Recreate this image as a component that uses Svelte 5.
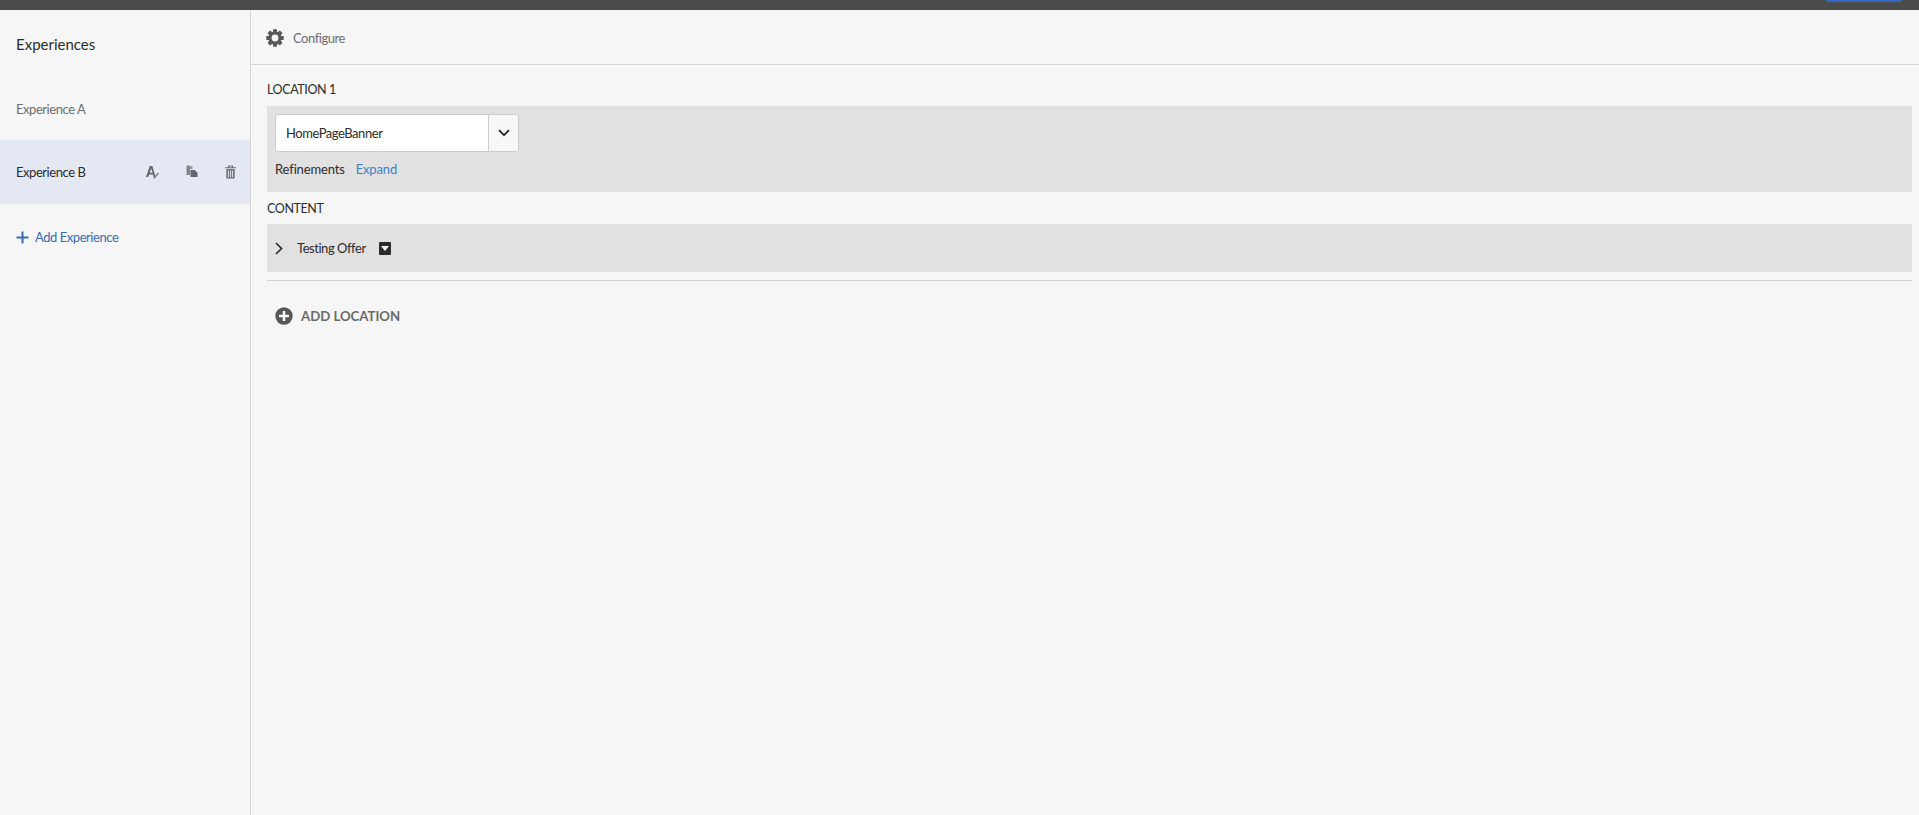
<script>
	const experiences = [
		{ name: 'Experience A', active: false },
		{ name: 'Experience B', active: true }
	];
</script>

<div class="page">
	<header class="topbar">
		<div class="save-btn"></div>
	</header>

	<div class="body">
		<aside class="sidebar">
			<h2 class="side-title">Experiences</h2>
			<ul class="exp-list">
				{#each experiences as exp}
					<li class="exp" class:active={exp.active}>
						<span class="exp-name">{exp.name}</span>
						{#if exp.active}
							<span class="exp-icons">
								<!-- rename -->
								<svg width="13" height="14" viewBox="0 0 13 14">
									<path d="M0 12 L3.8 1 H6.4 L9.6 12 H7.7 L7 9.4 H3.2 L2.2 12 Z M3.8 7.8 H6.6 L5.2 3.2 Z" fill="#66666b" fill-rule="evenodd" />
									<path d="M7.8 13.5 L12.5 8" stroke="#77777c" stroke-width="1.2" fill="none" />
								</svg>
								<!-- duplicate -->
								<svg width="12" height="13" viewBox="0 0 12 13">
									<path d="M0.5 0.5 H4 V10 H0.5 Z" fill="#85858a" />
									<path d="M4 1 H6.5 V4 H4 Z" fill="#a0a0a4" />
									<path d="M4.5 5 H8.5 L11.5 7.5 V12 H4.5 Z" fill="#62666e" />
								</svg>
								<!-- delete -->
								<svg width="11" height="14" viewBox="0 0 11 14">
									<path d="M0 2.7 H11 M3.5 2.5 V1 H7.5 V2.5" stroke="#6e6e72" stroke-width="1.1" fill="none" />
									<path d="M1.3 4 H9.7 V13.5 H1.3 Z" fill="#77777b" />
									<path d="M3.5 5.5 V12 M5.5 5.5 V12 M7.5 5.5 V12" stroke="#e4e8f2" stroke-width="0.9" />
								</svg>
							</span>
						{/if}
					</li>
				{/each}
			</ul>
			<button class="add-exp">
				<svg width="13" height="13" viewBox="0 0 13 13">
					<path d="M6.5 0.5 V12.5 M0.5 6.5 H12.5" stroke="#3d6ab4" stroke-width="2" />
				</svg>
				<span>Add Experience</span>
			</button>
		</aside>

		<main class="main">
			<div class="config-bar">
				<svg width="18" height="18" viewBox="0 0 18 18">
					<g fill="#58585a">
						<circle cx="9" cy="9" r="6.6" />
						<rect x="7" y="0.3" width="4" height="17.4" rx="0.6" />
						<rect x="7" y="0.3" width="4" height="17.4" rx="0.6" transform="rotate(45 9 9)" />
						<rect x="7" y="0.3" width="4" height="17.4" rx="0.6" transform="rotate(90 9 9)" />
						<rect x="7" y="0.3" width="4" height="17.4" rx="0.6" transform="rotate(135 9 9)" />
					</g>
					<circle cx="9" cy="9" r="3.4" fill="#f6f6f6" />
				</svg>
				<span>Configure</span>
			</div>

			<section class="content">
				<h3 class="label">LOCATION 1</h3>
				<div class="panel location">
					<div class="select">
						<span class="select-value">HomePageBanner</span>
						<span class="select-btn">
							<svg width="12" height="8" viewBox="0 0 12 8">
								<path d="M1 1.2 L6 6.2 L11 1.2" stroke="#2c2c2c" stroke-width="1.9" fill="none" />
							</svg>
						</span>
					</div>
					<div class="refine">
						<span>Refinements</span>
						<a href="#expand">Expand</a>
					</div>
				</div>

				<h3 class="label content-label">CONTENT</h3>
				<div class="panel offer">
					<svg class="chev" width="8" height="13" viewBox="0 0 8 13">
						<path d="M1 1 L6.5 6.5 L1 12" stroke="#2c2c2c" stroke-width="1.7" fill="none" />
					</svg>
					<span class="offer-name">Testing Offer</span>
					<span class="offer-menu"><i></i></span>
				</div>

				<div class="divider"></div>

				<button class="add-loc">
					<svg width="18" height="18" viewBox="0 0 18 18">
						<circle cx="9" cy="9" r="8.7" fill="#58585a" />
						<path d="M9 4 V14 M4 9 H14" stroke="#f6f6f6" stroke-width="2.6" />
					</svg>
					<span>ADD LOCATION</span>
				</button>
			</section>
		</main>
	</div>
</div>

<style>
	:global(body) {
		margin: 0;
		background: #f6f6f6;
	}

	.page {
		height: 815px;
		display: flex;
		flex-direction: column;
		overflow: hidden;
		font-family: Lato, "Open Sans", "Liberation Sans", sans-serif;
		font-size: 13px;
		letter-spacing: -0.45px;
		color: #2c2c2c;
	}

	.topbar {
		height: 10px;
		flex: none;
		background: #4b4b4b;
		position: relative;
	}

	.save-btn {
		position: absolute;
		right: 17px;
		top: 0;
		width: 76px;
		height: 2px;
		background: #2f68c4;
		border-radius: 0 0 3px 3px;
	}

	.body {
		flex: 1;
		display: flex;
	}

	.sidebar {
		width: 250px;
		flex: none;
		border-right: 1px solid #d6d6d6;
	}

	.side-title {
		margin: 0;
		padding: 0 16px;
		height: 68px;
		line-height: 68px;
		font-size: 15px;
		font-weight: 400;
		letter-spacing: 0;
		color: #2c2c2c;
	}

	.exp-list {
		list-style: none;
		margin: 0;
		padding: 0;
	}

	.exp {
		height: 62px;
		padding: 0 16px 1px;
		box-sizing: border-box;
		display: flex;
		align-items: center;
		justify-content: space-between;
		color: #6e6e6e;
	}

	.exp.active {
		height: 64px;
		background: #e4e8f2;
		color: #2c2c2c;
	}

	.exp-icons {
		display: flex;
		align-items: center;
		gap: 27px;
		margin-right: -2px;
	}

	.add-exp {
		display: flex;
		align-items: center;
		gap: 6px;
		margin-top: 21px;
		padding: 0 16px;
		height: 24px;
		border: 0;
		background: none;
		font: inherit;
		letter-spacing: inherit;
		color: #3d6ab4;
	}

	.main {
		flex: 1;
		min-width: 0;
	}

	.config-bar {
		display: flex;
		align-items: center;
		gap: 9px;
		padding-left: 15px;
		padding-top: 1px;
		height: 53px;
		border-bottom: 1px solid #d6d6d6;
		color: #6e6e6e;
	}

	.content {
		padding: 16px 7px 0 16px;
	}

	.label {
		margin: 0;
		height: 25px;
		line-height: 17px;
		font-size: 12.5px;
		letter-spacing: -0.4px;
		font-weight: 400;
		color: #2c2c2c;
	}

	.content-label {
		height: 24px;
		margin-top: 8px;
	}

	.panel {
		background: #e1e1e1;
	}

	.location {
		height: 86px;
		padding: 8px 8px 0;
		box-sizing: border-box;
	}

	.select {
		width: 244px;
		height: 38px;
		display: flex;
		box-sizing: border-box;
		border: 1px solid #cdcdcd;
		border-radius: 3px;
		background: #fff;
	}

	.select-value {
		flex: 1;
		padding-left: 10px;
		line-height: 36px;
	}

	.select-btn {
		width: 29px;
		display: flex;
		align-items: center;
		justify-content: center;
		border-left: 1px solid #cdcdcd;
		background: #f7f7f7;
		border-radius: 0 3px 3px 0;
	}

	.refine {
		display: flex;
		gap: 11px;
		margin-top: 8px;
		line-height: 18px;
		letter-spacing: -0.15px;
	}

	.refine a {
		color: #3f7fcb;
		text-decoration: none;
	}

	.offer {
		height: 48px;
		display: flex;
		align-items: center;
		padding-left: 8px;
	}

	.offer-name {
		margin-left: 14px;
	}

	.offer-menu {
		margin-left: 13px;
		width: 12px;
		height: 13px;
		background: #2c2c2c;
		border-radius: 1px;
		display: flex;
		align-items: center;
		justify-content: center;
	}

	.offer-menu i {
		width: 0;
		height: 0;
		border-left: 4px solid transparent;
		border-right: 4px solid transparent;
		border-top: 5px solid #f6f6f6;
	}

	.divider {
		margin-top: 8px;
		border-top: 1px solid #cfcfcf;
	}

	.add-loc {
		display: flex;
		align-items: center;
		gap: 8px;
		margin-top: 25px;
		padding: 0 0 0 8px;
		height: 20px;
		border: 0;
		background: none;
		font: inherit;
		font-size: 13.2px;
		letter-spacing: 0;
		font-weight: 700;
		color: #6a6a6a;
	}
</style>
